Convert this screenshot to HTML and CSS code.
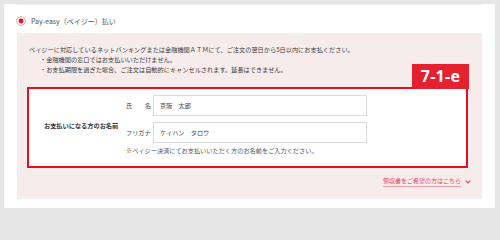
FILE: index.html
```html
<!DOCTYPE html>
<html lang="ja">
<head>
<meta charset="utf-8">
<link rel="stylesheet" href="styles.css">
</head>
<body>
<div class="card">
  <div class="method">
    <svg class="radio" width="10" height="10" viewBox="0 0 10 10"><circle cx="5" cy="5" r="4.4" fill="#fff" stroke="#f0a3aa" stroke-width="1"/><circle cx="5" cy="5" r="2.4" fill="#e60e1f"/></svg>
    <span class="method-name">Pay-easy（ペイジー）払い</span>
  </div>
  <div class="panel">
    <p class="desc">ペイジーに対応しているネットバンキングまたは金融機関ＡＴＭにて、ご注文の翌日から5日以内にお支払ください。</p>
    <ul class="notes">
      <li>・金融機関の窓口ではお支払いいただけません。</li>
      <li>・お支払期限を過ぎた場合、ご注文は自動的にキャンセルされます。延長はできません。</li>
    </ul>
    <div class="namebox">
      <div class="badge">7-1-e</div>
      <div class="label">お支払いになる方のお名前</div>
      <div class="fields">
        <div class="row">
          <div class="flabel split"><span>氏</span><span>名</span></div>
          <div class="input">京阪　太郎</div>
        </div>
        <div class="row">
          <div class="flabel">フリガナ</div>
          <div class="input">ケイハン　タロウ</div>
        </div>
        <p class="hint"><span class="mark">※</span>ペイジー決済にてお支払いいただく方のお名前をご入力ください。</p>
      </div>
    </div>
    <div class="linkrow">
      <a class="receipt" href="#">領収書をご希望の方はこちら</a>
      <svg class="chev" width="6" height="4" viewBox="0 0 6 4"><path d="M0.6 0.6 L3 3 L5.4 0.6" fill="none" stroke="#e4485e" stroke-width="1.1"/></svg>
    </div>
  </div>
</div>
</body>
</html>
```

FILE: styles.css
```css
html, body {
  margin: 0;
  padding: 0;
}
body {
  background: #e6e6e6;
  width: 500px;
  height: 211px;
  overflow: hidden;
  font-family: "Noto Sans CJK JP", "Noto Sans", sans-serif;
  color: #3a3a3a;
}
.card {
  margin: 4px 5px 0 4px;
  background: #fff;
  padding: 0 13px 9px 13px;
}
.method {
  height: 25px;
  padding-top: 3px;
  border-top: 1px solid #f1f1f1;
  display: flex;
  align-items: center;
}
.radio {
  margin-left: -1px;
  display: block;
}
.method-name {
  margin-left: 5px;
  font-size: 7px;
  color: #555;
  line-height: 10px;
}
.panel {
  background: #f6ecec;
  padding: 12px 14px 12px 10px;
}
.desc {
  margin: 0;
  padding-left: 2px;
  font-size: 6.2px;
  line-height: 10px;
  color: #3a3a3a;
}
.notes {
  list-style: none;
  margin: 0;
  padding: 0 0 0 13px;
  font-size: 6.2px;
  line-height: 10px;
}
.namebox {
  position: relative;
  margin-top: 12px;
  border: 2px solid #e60e1f;
  background: #fff;
  display: flex;
  align-items: center;
  padding: 6px 0 10px 0;
}
.badge {
  position: absolute;
  top: -25px;
  right: -3px;
  width: 57px;
  height: 25px;
  background: #e5202f;
  color: #fff;
  font-family: "Open Sans", "Noto Sans", sans-serif;
  font-weight: 700;
  font-size: 16px;
  line-height: 25px;
  text-align: center;
  letter-spacing: 0.3px;
}
.label {
  width: 82px;
  padding-left: 15px;
  font-size: 6.2px;
  font-weight: 700;
  line-height: 10px;
  color: #333;
}
.fields {
  display: flex;
  flex-direction: column;
}
.row {
  display: flex;
  align-items: center;
  margin-bottom: 6px;
}
.row + .row {
  margin-bottom: 0;
}
.flabel {
  width: 25px;
  margin-right: 2px;
  font-size: 6.2px;
  line-height: 10px;
  color: #444;
}
.split {
  display: flex;
  justify-content: space-between;
}
.input {
  width: 206px;
  height: 19px;
  border: 1px solid #dcdcdc;
  padding-left: 6px;
  font-size: 6.2px;
  line-height: 19px;
  color: #444;
  background: #fff;
}
.hint {
  margin: 3px 0 0 0;
  font-size: 6.2px;
  line-height: 10px;
  color: #555;
}
.mark {
  font-family: "Noto Sans CJK JP", sans-serif;
  font-variant-emoji: text;
  color: #666;
}
.linkrow {
  margin-top: 8px;
  margin-right: -3px;
  display: flex;
  justify-content: flex-end;
  align-items: center;
}
.receipt {
  font-size: 6px;
  line-height: 10px;
  color: #e4485e;
  text-decoration: none;
  border-bottom: 1px solid #eea0aa;
}
.chev {
  display: block;
  margin-left: 4px;
}
```
